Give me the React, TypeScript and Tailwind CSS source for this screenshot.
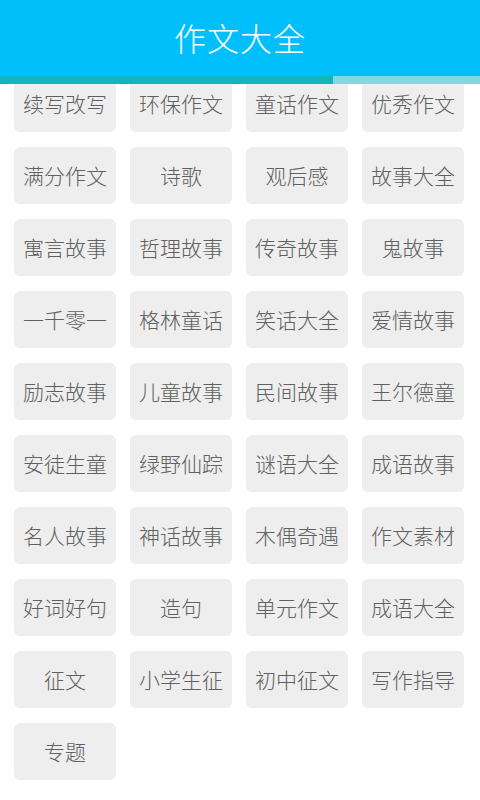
const items = [
  "续写改写", "环保作文", "童话作文", "优秀作文",
  "满分作文", "诗歌", "观后感", "故事大全",
  "寓言故事", "哲理故事", "传奇故事", "鬼故事",
  "一千零一", "格林童话", "笑话大全", "爱情故事",
  "励志故事", "儿童故事", "民间故事", "王尔德童",
  "安徒生童", "绿野仙踪", "谜语大全", "成语故事",
  "名人故事", "神话故事", "木偶奇遇", "作文素材",
  "好词好句", "造句", "单元作文", "成语大全",
  "征文", "小学生征", "初中征文", "写作指导",
  "专题",
];

export default function App() {
  return (
    <div
      className="w-[480px] h-[800px] bg-white flex flex-col overflow-hidden"
      style={{ fontFamily: '"Noto Sans CJK SC", "Noto Sans", sans-serif' }}
    >
      <header className="shrink-0 z-10">
        <div className="h-[76px] bg-[#00bffb] flex items-center justify-center pb-[3px]">
          <h1 className="text-white text-[32px] font-light tracking-[1px] leading-none">作文大全</h1>
        </div>
        <div className="h-[8px] flex">
          <div className="w-[333px] bg-[#14b4bb]" />
          <div className="flex-1 bg-[#7fd9dd]" />
        </div>
      </header>

      <main className="flex-1 overflow-hidden">
        <div className="grid grid-cols-[repeat(4,102px)] gap-x-[14px] gap-y-[15px] pl-[14px] mt-[-9px]">
          {items.map((label) => (
            <button
              key={label}
              className="h-[57px] rounded-[6px] bg-[#eeeeee] text-[#606060] text-[21px] font-light leading-none flex items-center justify-center"
            >
              {label}
            </button>
          ))}
        </div>
      </main>
    </div>
  );
}
